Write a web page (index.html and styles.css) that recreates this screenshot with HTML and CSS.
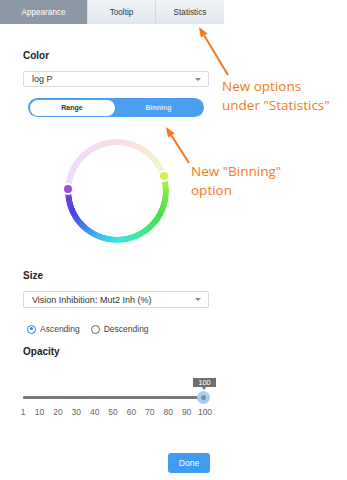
FILE: index.html
```html
<!DOCTYPE html>
<html>
<head>
<meta charset="utf-8">
<link rel="stylesheet" href="styles.css">
</head>
<body>
<div class="page">
  <div class="panel">
    <div class="tabs">
      <div class="tab active">Appearance</div>
      <div class="tab">Tooltip</div>
      <div class="tab">Statistics</div>
    </div>
    <div class="content">
      <div class="label label-color">Color</div>
      <div class="select"><span>log P</span><span class="caret"></span></div>
      <div class="toggle">
        <div class="opt on">Range</div>
        <div class="opt off">Binning</div>
      </div>
      <div class="wheel">
        <div class="ring"></div>
        <span class="handle h-left"></span>
        <span class="handle h-right"></span>
      </div>
      <div class="label label-size">Size</div>
      <div class="select select-size"><span>Vision Inhibition: Mut2 Inh (%)</span><span class="caret"></span></div>
      <div class="radios">
        <span class="radio checked"></span><span class="rlabel">Ascending</span>
        <span class="radio"></span><span class="rlabel">Descending</span>
      </div>
      <div class="label label-opacity">Opacity</div>
      <div class="slider">
        <div class="track"></div>
        <div class="thumb"></div>
        <div class="tip">100</div>
      </div>
      <div class="ticks">
        <span style="left:0%">1</span>
        <span style="left:9.09%">10</span>
        <span style="left:19.19%">20</span>
        <span style="left:29.29%">30</span>
        <span style="left:39.39%">40</span>
        <span style="left:49.49%">50</span>
        <span style="left:59.6%">60</span>
        <span style="left:69.7%">70</span>
        <span style="left:79.8%">80</span>
        <span style="left:89.9%">90</span>
        <span style="left:100%">100</span>
      </div>
      <div class="actions"><button class="done">Done</button></div>
    </div>
  </div>

  <div class="note note-stats">New options<br>under "Statistics"</div>
  <div class="note note-binning">New "Binning"<br>option</div>
  <svg class="arrows" width="347" height="480" viewBox="0 0 347 480">
    <line x1="228" y1="75" x2="204.2" y2="35.6" stroke="#f47a20" stroke-width="2"/>
    <polygon points="199,27 207.6,33.5 200.8,37.6" fill="#f47a20"/>
    <line x1="189" y1="163" x2="171.4" y2="135.4" stroke="#f47a20" stroke-width="2"/>
    <polygon points="166,127 174.8,133.3 168,137.6" fill="#f47a20"/>
  </svg>
</div>
</body>
</html>
```
FILE: styles.css
```css
* { box-sizing: border-box; }
html, body { margin: 0; padding: 0; background: #fff; }
body { font-family: "Liberation Sans", Arial, sans-serif; color: #333; }
.page { position: relative; width: 347px; height: 480px; overflow: hidden; }
.panel { width: 224px; }

.tabs { display: flex; height: 24px; }
.tab {
  display: flex; align-items: center; justify-content: center;
  font-size: 8.2px; color: #333;
  background: linear-gradient(#f0f3f7, #e3e8ee);
  border-left: 1px solid #d3d9e0;
}
.tab:nth-child(1) { width: 87px; border-left: none; }
.tab:nth-child(2) { width: 68px; }
.tab:nth-child(3) { width: 69px; }
.tab.active { background: #8d98a6; color: #fff; }

.content { padding-left: 23px; width: 224px; }
.label { font-weight: bold; font-size: 10px; line-height: 12px; color: #222; }
.label-color { margin-top: 26px; }
.label-size { margin-top: 27px; }
.label-opacity { margin-top: 11px; }

.select {
  width: 186px; height: 16px; margin-top: 9px;
  border: 1px solid #d9d9d9; border-radius: 2px;
  display: flex; align-items: center; justify-content: space-between;
  padding: 0 7px 0 8px; font-size: 9px; color: #333;
}
.select-size { height: 17px; }
.caret {
  width: 0; height: 0;
  border-left: 3px solid transparent; border-right: 3px solid transparent;
  border-top: 3.5px solid #8a8a8a;
}

.toggle {
  margin: 11px 0 0 5px; width: 176px; height: 19px;
  border-radius: 10px; background: #4a9ff0; padding: 1.5px;
  display: flex;
}
.opt { display: flex; align-items: center; justify-content: center; font-size: 7px; font-weight: bold; }
.opt.on { width: 85px; background: #fff; border-radius: 9px; color: #333; }
.opt.off { flex: 1; color: #d6e7fb; }

.wheel { position: relative; width: 104px; height: 104px; margin: 22px 0 0 42px; }
.ring {
  width: 104px; height: 104px; border-radius: 50%;
  background: conic-gradient(
    #f9dce6 0deg, #f9e4dc 25deg, #f6eed6 45deg, #eff6d0 65deg,
    #b4f048 76deg, #78e848 95deg, #48e048 118deg, #40e890 148deg,
    #40e4e0 178deg, #40b4f0 205deg, #4078f0 225deg, #4a44e6 245deg,
    #6a40e0 262deg, #8a48e0 270deg,
    #ecdcf8 276deg, #f2dcf6 315deg, #f9dce6 360deg);
  -webkit-mask: radial-gradient(circle, transparent 45.5px, #000 46px);
  mask: radial-gradient(circle, transparent 45.5px, #000 46px);
}
.handle {
  position: absolute; width: 8px; height: 8px; border-radius: 50%;
  box-shadow: 0 0 0 2px #fff;
}
.h-left { left: -1px; top: 46px; background: #9a4ee0; }
.h-right { left: 94.5px; top: 33px; background: #d4f050; }

.radios { display: flex; align-items: center; height: 12px; margin-top: 15px; padding-left: 4px; font-size: 8.5px; color: #444; }
.radio { width: 9px; height: 9px; border-radius: 50%; border: 1px solid #666; margin-right: 4px; position: relative; }
.radio.checked { border: 1.5px solid #2f7fe0; }
.radio.checked::after {
  content: ""; position: absolute; left: 1.5px; top: 1.5px; width: 3px; height: 3px;
  border-radius: 50%; background: #2f7fe0;
}
.rlabel { margin-right: 11px; }

.slider { position: relative; width: 182px; margin-top: 20px; padding-top: 18px; padding-bottom: 6px; }
.track { height: 3px; background: #7a7a7a; border-radius: 1px; }
.thumb {
  position: absolute; left: 174px; top: 13px; width: 13px; height: 13px;
  border-radius: 50%; background: #7f8a96; border: 4.5px solid #a6cff5;
}
.tip {
  position: absolute; left: 170px; top: 0; width: 23px; height: 9px;
  background: #6f6f6f; color: #fff; font-size: 7.5px; line-height: 9px; text-align: center;
}
.tip::after {
  content: ""; position: absolute; left: 9px; top: 9px;
  border-left: 2.5px solid transparent; border-right: 2.5px solid transparent;
  border-top: 3px solid #6f6f6f;
}

.ticks { position: relative; width: 182px; height: 10px; margin-top: 2px; font-size: 8.5px; line-height: 10px; color: #666; }
.ticks span { position: absolute; top: 0; transform: translateX(-50%); white-space: nowrap; }

.actions { display: flex; justify-content: flex-end; width: 187px; margin-top: 36px; }
.done {
  width: 42px; height: 20px; border: none; border-radius: 3px;
  background: #3f9cf5; color: #fff; font-family: "Liberation Sans", Arial, sans-serif;
  font-size: 8.5px; padding: 0;
}

.note {
  position: absolute; font-family: "Open Sans", sans-serif; font-size: 13.5px;
  line-height: 19px; color: #f47a20; white-space: nowrap;
}
.note-stats { left: 222px; top: 77px; }
.note-binning { left: 191px; top: 162px; }
.arrows { position: absolute; left: 0; top: 0; pointer-events: none; }
```
